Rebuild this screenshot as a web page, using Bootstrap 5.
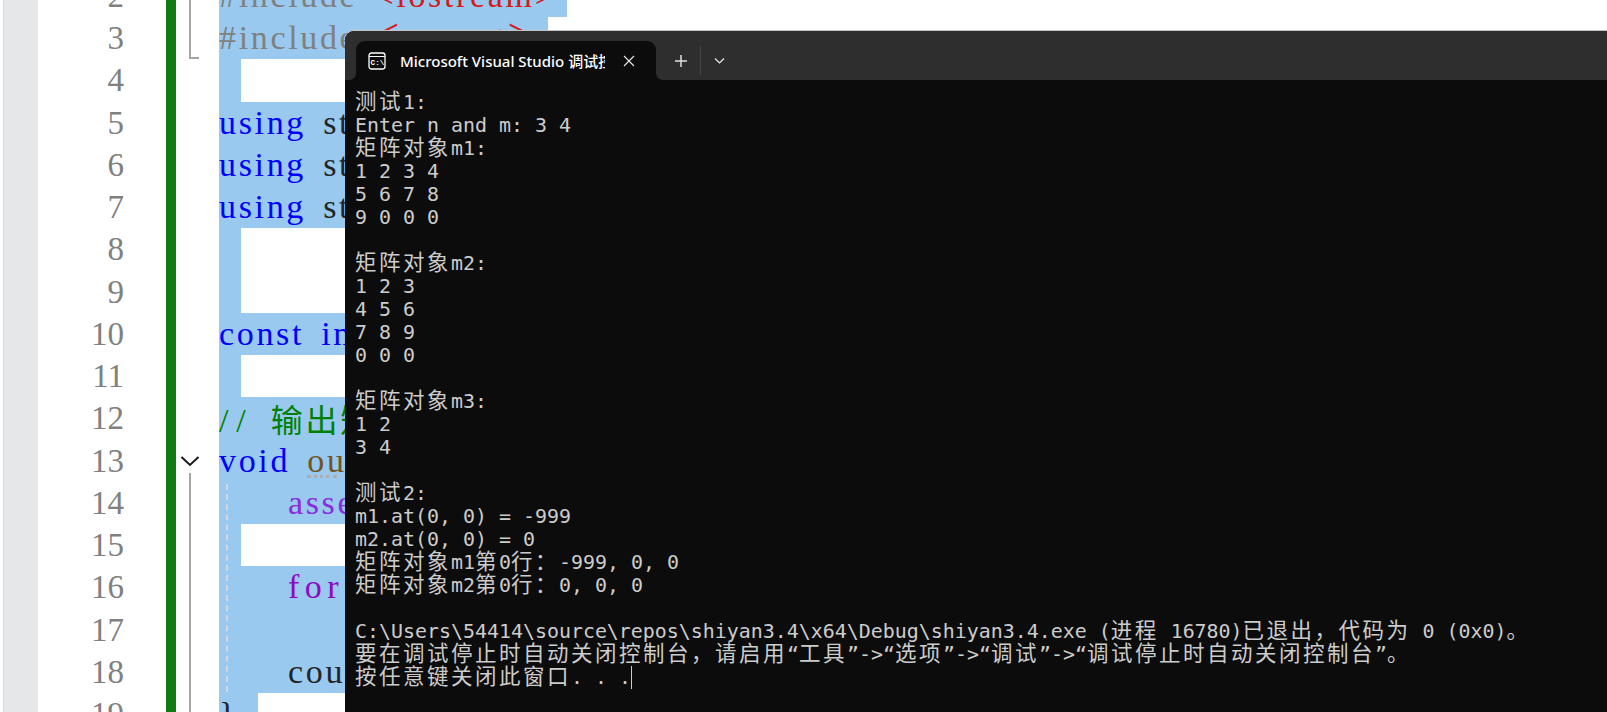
<!DOCTYPE html>
<html lang="zh"><head><meta charset="utf-8">
<link href="https://cdn.jsdelivr.net/npm/bootstrap@5.3.0/dist/css/bootstrap.min.css" rel="stylesheet">
<style>
html,body{height:712px;overflow:hidden;background:#fff}
.stage{height:712px;overflow:hidden}
.strip{width:35px;background:#e6e7e8;border-left:1px solid #d8d8e2;margin-left:3px;flex:none}
.nums{width:86px;flex:none;font:33px/42.25px "Liberation Serif",serif;color:#808080;text-align:right;margin-top:-25.25px}
.nums div{height:42.25px}
.greenbar{width:10px;background:#107c10;margin-left:42px;flex:none}
.gutter{width:43px;flex:none}
.codecol{flex:1;margin-top:-25.25px;min-width:0;font:34px/42.25px "Liberation Serif",serif;letter-spacing:2.65px;word-spacing:6.1px}
.cl{height:42.25px}
.sel{display:block;background:#99c9ef;height:42.25px;width:320px;white-space:pre;overflow:hidden}
.sel.l2{width:348px}
.sel.l3{width:329px}
.blank{display:block;background:#99c9ef;width:22px;height:42.25px}
.sel.brace{width:39px}
.kw{color:#0000ff}.pp{color:#808080}.str{color:#d41a1a}.cm{color:#008000}.fn{color:#74531f}.mac{color:#8a2be2}.ctl{color:#8f08c4;letter-spacing:5.5px}
.ang{font-size:44px;line-height:0;letter-spacing:-3px}
.slashes{letter-spacing:7.8px}
.cjk{font-family:"Noto Sans CJK SC",sans-serif;font-size:32px;letter-spacing:2.66px}
.dots{position:absolute;left:307px;top:475px;width:30px;border-top:3px dotted #adadad}
.guide{position:absolute;left:226px;top:484px;height:208px;border-left:2px dashed #d6d6d6}
.foldtop{position:absolute;left:189px;top:0;width:10px;height:59px;border-left:2px solid #a5a5a5;border-bottom:2px solid #a5a5a5}
.foldline{position:absolute;left:189px;top:473px;bottom:0;border-left:2px solid #a5a5a5}
.chev{position:absolute;left:180px;top:454px}
.term{position:absolute;left:345px;top:31px;right:0;bottom:0;background:#0c0c0c;border-top-left-radius:9px;box-shadow:0 -1px 0 #c4c4c4;color:#cccccc;overflow:hidden}
.tbar{height:49px;color:#fff}
.tleft{width:11px;background:#2e2e2e;border-bottom-right-radius:7px;flex:none}
.tabwrap{width:300px;background:#2e2e2e;padding-top:10px;flex:none}
.ttab{height:39px;background:#0c0c0c;border-radius:9px 9px 0 0;padding-left:12px}
.ttitle{font:500 15px "Noto Sans","Noto Sans CJK SC",sans-serif;width:205px;overflow:hidden;white-space:nowrap;margin-left:14px;color:#fff}
.tclose{margin-left:auto;margin-right:20px}
.tright{flex:1;background:#2e2e2e;border-bottom-left-radius:7px;padding-top:15px;height:49px}
.tctl{height:29px}
.tplus{margin-left:18px;margin-right:12px}
.tchev{margin-left:13px}
.tsep{width:1px;height:29px;background:#464646}
.tout{padding:11px 0 0 10px;font:19.93px/23px "DejaVu Sans Mono",monospace;white-space:pre}
.z{font-family:"Noto Sans CJK SC",sans-serif;font-size:21.5px;letter-spacing:2.5px;line-height:0}
.caret{display:inline-block;width:1px;height:23px;background:#ccc;vertical-align:top}
.icontext{font:700 7.6px "Liberation Mono",monospace;fill:#fff}
</style></head>
<body>
<div class="stage d-flex position-relative">
  <div class="strip"></div>
  <div class="nums"><div>2</div><div>3</div><div>4</div><div>5</div><div>6</div><div>7</div><div>8</div><div>9</div><div>10</div><div>11</div><div>12</div><div>13</div><div>14</div><div>15</div><div>16</div><div>17</div><div>18</div><div>19</div></div>
  <div class="greenbar"></div>
  <div class="gutter"></div>
  <div class="codecol">
    <div class="cl"><span class="sel l2"><span class="pp">#include</span> <span class="str">&lt;iostream&gt;</span></span></div>
    <div class="cl"><span class="sel l3"><span class="pp">#include</span> <span class="str"><span class="ang">&lt;</span>cassert<span class="ang">&gt;</span></span></span></div>
    <div class="cl"><span class="blank"></span></div>
    <div class="cl"><span class="sel"><span class="kw">using</span> st</span></div>
    <div class="cl"><span class="sel"><span class="kw">using</span> st</span></div>
    <div class="cl"><span class="sel"><span class="kw">using</span> st</span></div>
    <div class="cl"><span class="blank"></span></div>
    <div class="cl"><span class="blank"></span></div>
    <div class="cl"><span class="sel"><span class="kw">const in</span></span></div>
    <div class="cl"><span class="blank"></span></div>
    <div class="cl"><span class="sel"><span class="cm"><span class="slashes">//</span> <span class="cjk">输出矩</span></span></span></div>
    <div class="cl"><span class="sel"><span class="kw">void</span> <span class="fn">out</span></span></div>
    <div class="cl"><span class="sel">    <span class="mac">asse</span></span></div>
    <div class="cl"><span class="blank"></span></div>
    <div class="cl"><span class="sel">    <span class="ctl">for</span></span></div>
    <div class="cl"><span class="sel"></span></div>
    <div class="cl"><span class="sel">    cout</span></div>
    <div class="cl"><span class="sel brace">}</span></div>
  </div>
  <div class="foldtop"></div>
  <svg class="chev" width="20" height="14" viewBox="0 0 20 14"><path d="M1.5 3 L10 11 L18.5 3" fill="none" stroke="#1a1a1a" stroke-width="2"/></svg>
  <div class="foldline"></div>
  <div class="guide"></div>
  <div class="dots"></div>

  <div class="term">
    <div class="tbar d-flex">
      <div class="tleft"></div>
      <div class="tabwrap">
        <div class="ttab d-flex align-items-center">
          <svg width="18" height="18" viewBox="0 0 18 18"><rect x="1" y="1" width="16" height="16" rx="2.5" fill="none" stroke="#fff" stroke-width="1.3"/><path d="M1 4.5H17" stroke="#fff" stroke-width="1.2"/><text class="icontext" x="2.6" y="13">C:\</text></svg>
          <div class="ttitle">Microsoft Visual Studio 调试控制台</div>
          <svg class="tclose" width="14" height="14" viewBox="0 0 14 14"><path d="M2 2 L12 12 M12 2 L2 12" stroke="#e8e8e8" stroke-width="1.1"/></svg>
        </div>
      </div>
      <div class="tright">
        <div class="tctl d-flex align-items-center">
          <svg class="tplus" width="14" height="14" viewBox="0 0 14 14"><path d="M7 1V13M1 7H13" stroke="#e0e0e0" stroke-width="1.5"/></svg>
          <div class="tsep"></div>
          <svg class="tchev" width="11" height="8" viewBox="0 0 11 8"><path d="M1 1.5 L5.5 6 L10 1.5" fill="none" stroke="#e8e8e8" stroke-width="1.2"/></svg>
        </div>
      </div>
    </div>
<div class="tout"><span class="z">测试</span>1:
Enter n and m: 3 4
<span class="z">矩阵对象</span>m1:
1 2 3 4
5 6 7 8
9 0 0 0

<span class="z">矩阵对象</span>m2:
1 2 3
4 5 6
7 8 9
0 0 0

<span class="z">矩阵对象</span>m3:
1 2
3 4

<span class="z">测试</span>2:
m1.at(0, 0) = -999
m2.at(0, 0) = 0
<span class="z">矩阵对象</span>m1<span class="z">第</span>0<span class="z">行：</span>-999, 0, 0
<span class="z">矩阵对象</span>m2<span class="z">第</span>0<span class="z">行：</span>0, 0, 0

C:\Users\54414\source\repos\shiyan3.4\x64\Debug\shiyan3.4.exe (<span class="z">进程</span> 16780)<span class="z">已退出，代码为</span> 0 (0x0)<span class="z">。</span>
<span class="z">要在调试停止时自动关闭控制台，请启用</span>“<span class="z">工具</span>”-&gt;“<span class="z">选项</span>”-&gt;“<span class="z">调试</span>”-&gt;“<span class="z">调试停止时自动关闭控制台</span>”<span class="z">。</span>
<span class="z">按任意键关闭此窗口</span>. . .<span class="caret"></span></div>
  </div>
</div>
<script src="https://cdn.jsdelivr.net/npm/bootstrap@5.3.0/dist/js/bootstrap.bundle.min.js"></script>
</body></html>
